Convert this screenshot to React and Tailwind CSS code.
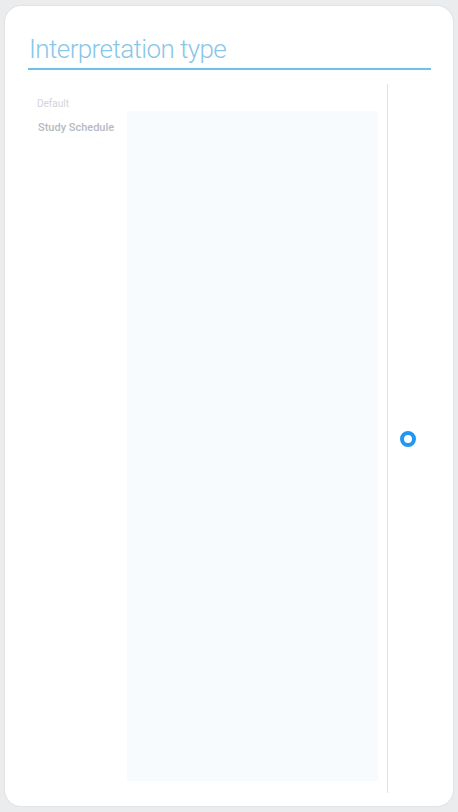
export default function App() {
  return (
    <div className="min-h-screen bg-[#ebecee] pt-[6px] pb-[6px] pl-[5px] pr-[5px]" style={{ fontFamily: 'Roboto, "Liberation Sans", sans-serif' }}>
      <div className="h-[800px] rounded-[16px] bg-white shadow-[0_0_2px_rgba(0,0,0,0.12)] pl-[23px] pr-[22px] pt-[24px] flex flex-col">
        <h1 className="text-[26px] leading-[38px] font-light tracking-[-0.6px] text-[#88c7e9] pl-[1px]">Interpretation type</h1>
        <div className="h-[2px] bg-[#6cc3e6]"></div>
        <div className="mt-[14px] flex h-[709px]">
          <div className="w-[359px] pl-[9px] pr-[9px] pt-[13px] pb-[12px] flex flex-col">
            <div className="text-[10px] leading-[14px] text-[#d2d4d8]">Default</div>
            <div className="flex flex-1 items-stretch">
              <div className="w-[90px] pt-[11px] pl-[1px] text-[11px] leading-[12px] font-medium text-[#b6bac3]">Study Schedule</div>
              <div className="flex-1 bg-[#f8fbfd]"></div>
            </div>
          </div>
          <div className="flex-1 border-l border-[#e2e3e6] flex items-center pl-[12px]">
            <div className="w-[16px] h-[16px] rounded-full border-[4px] border-[#2196f3] bg-white"></div>
          </div>
        </div>
      </div>
    </div>
  );
}
